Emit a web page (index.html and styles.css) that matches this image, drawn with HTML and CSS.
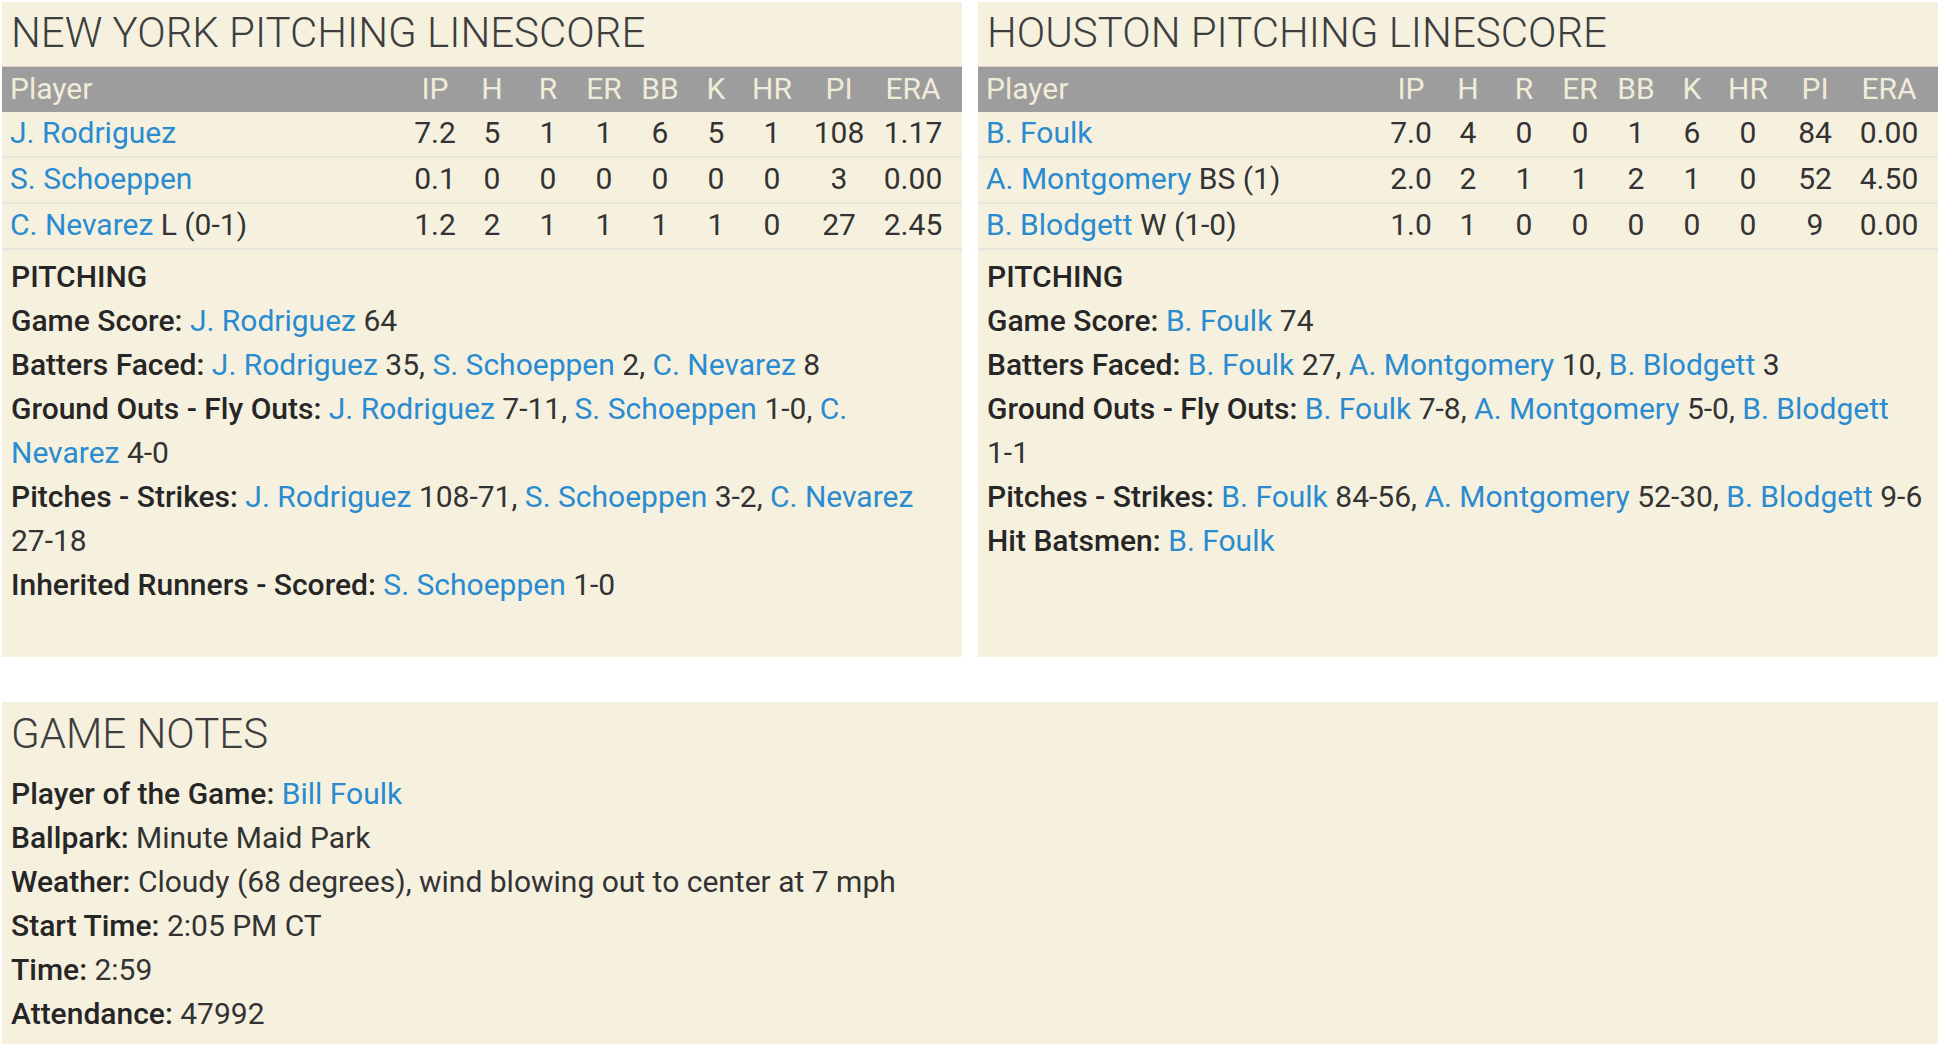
FILE: index.html
```html
<!DOCTYPE html>
<html lang="en">
<head>
<meta charset="utf-8">
<title>Pitching Linescore</title>
<link rel="stylesheet" href="styles.css">
</head>
<body>
<div class="top">
  <section class="panel">
    <h2 class="title">NEW YORK PITCHING LINESCORE</h2>
    <table class="lines">
      <colgroup><col><col class="c-ip"><col class="c-s"><col class="c-s"><col class="c-s"><col class="c-s"><col class="c-s"><col class="c-s"><col class="c-pi"><col class="c-era"></colgroup>
      <thead><tr><th class="name">Player</th><th>IP</th><th>H</th><th>R</th><th>ER</th><th>BB</th><th>K</th><th>HR</th><th>PI</th><th class="era">ERA</th></tr></thead>
      <tbody>
        <tr><td class="name"><a href="#">J. Rodriguez</a></td><td>7.2</td><td>5</td><td>1</td><td>1</td><td>6</td><td>5</td><td>1</td><td>108</td><td class="era">1.17</td></tr>
        <tr><td class="name"><a href="#">S. Schoeppen</a></td><td>0.1</td><td>0</td><td>0</td><td>0</td><td>0</td><td>0</td><td>0</td><td>3</td><td class="era">0.00</td></tr>
        <tr><td class="name"><a href="#">C. Nevarez</a> L (0-1)</td><td>1.2</td><td>2</td><td>1</td><td>1</td><td>1</td><td>1</td><td>0</td><td>27</td><td class="era">2.45</td></tr>
      </tbody>
    </table>
    <div class="notes">
      <p><b>PITCHING</b></p>
      <p><b>Game Score:</b> <a href="#">J. Rodriguez</a> 64</p>
      <p><b>Batters Faced:</b> <a href="#">J. Rodriguez</a> 35, <a href="#">S. Schoeppen</a> 2, <a href="#">C. Nevarez</a> 8</p>
      <p><b>Ground Outs - Fly Outs:</b> <a href="#">J. Rodriguez</a> <span class="v">7-11,</span> <a href="#">S. Schoeppen</a> <span class="v">1-0,</span> <a href="#">C. Nevarez</a> <span class="v">4-0</span></p>
      <p><b>Pitches - Strikes:</b> <a href="#">J. Rodriguez</a> <span class="v">108-71,</span> <a href="#">S. Schoeppen</a> <span class="v">3-2,</span> <a href="#">C. Nevarez</a> <span class="v">27-18</span></p>
      <p><b>Inherited Runners - Scored:</b> <a href="#">S. Schoeppen</a> 1-0</p>
    </div>
  </section>
  <section class="panel">
    <h2 class="title">HOUSTON PITCHING LINESCORE</h2>
    <table class="lines">
      <colgroup><col><col class="c-ip"><col class="c-s"><col class="c-s"><col class="c-s"><col class="c-s"><col class="c-s"><col class="c-s"><col class="c-pi"><col class="c-era"></colgroup>
      <thead><tr><th class="name">Player</th><th>IP</th><th>H</th><th>R</th><th>ER</th><th>BB</th><th>K</th><th>HR</th><th>PI</th><th class="era">ERA</th></tr></thead>
      <tbody>
        <tr><td class="name"><a href="#">B. Foulk</a></td><td>7.0</td><td>4</td><td>0</td><td>0</td><td>1</td><td>6</td><td>0</td><td>84</td><td class="era">0.00</td></tr>
        <tr><td class="name"><a href="#">A. Montgomery</a> BS (1)</td><td>2.0</td><td>2</td><td>1</td><td>1</td><td>2</td><td>1</td><td>0</td><td>52</td><td class="era">4.50</td></tr>
        <tr><td class="name"><a href="#">B. Blodgett</a> W (1-0)</td><td>1.0</td><td>1</td><td>0</td><td>0</td><td>0</td><td>0</td><td>0</td><td>9</td><td class="era">0.00</td></tr>
      </tbody>
    </table>
    <div class="notes">
      <p><b>PITCHING</b></p>
      <p><b>Game Score:</b> <a href="#">B. Foulk</a> 74</p>
      <p><b>Batters Faced:</b> <a href="#">B. Foulk</a> 27, <a href="#">A. Montgomery</a> 10, <a href="#">B. Blodgett</a> 3</p>
      <p><b>Ground Outs - Fly Outs:</b> <a href="#">B. Foulk</a> <span class="v">7-8,</span> <a href="#">A. Montgomery</a> <span class="v">5-0,</span> <a href="#">B. Blodgett</a> <span class="v">1-1</span></p>
      <p><b>Pitches - Strikes:</b> <a href="#">B. Foulk</a> <span class="v">84-56,</span> <a href="#">A. Montgomery</a> <span class="v">52-30,</span> <a href="#">B. Blodgett</a> <span class="v">9-6</span></p>
      <p><b>Hit Batsmen:</b> <a href="#">B. Foulk</a></p>
    </div>
  </section>
</div>
<section class="panel game-notes">
  <h2 class="title">GAME NOTES</h2>
  <div class="notes">
    <p><b>Player of the Game:</b> <a href="#">Bill Foulk</a></p>
    <p><b>Ballpark:</b> Minute Maid Park</p>
    <p><b>Weather:</b> Cloudy (68 degrees), wind blowing out to center at 7 mph</p>
    <p><b>Start Time:</b> 2:05 PM CT</p>
    <p><b>Time:</b> 2:59</p>
    <p><b>Attendance:</b> 47992</p>
  </div>
</section>
</body>
</html>
```
FILE: styles.css
```css
html {
  overflow: hidden;
  background: #ffffff;
}

body {
  margin: 2px 0 0 2px;
  font-family: Roboto, "Liberation Sans", sans-serif;
  font-size: 30px;
  color: #333333;
}

a {
  color: #2a8bd0;
  text-decoration: none;
}

.top {
  display: flex;
  gap: 16px;
}

.panel {
  flex: 1 1 0;
  background: #f6f1df;
  padding-bottom: 50px;
}

.title {
  margin: 7px 0 9px;
  padding-left: 9px;
  font-size: 42px;
  font-weight: 300;
  line-height: 48px;
  color: #3e3e3e;
}

.lines {
  width: 100%;
  border-collapse: collapse;
  table-layout: fixed;
}

.c-ip { width: 58px; }
.c-s { width: 56px; }
.c-pi { width: 78px; }
.c-era { width: 84px; }

.lines th {
  background: #9d9d9d;
  color: #f1ecda;
  font-weight: 400;
  height: 43px;
  padding: 0 0 2px;
  text-align: center;
  border-top: 1px solid #d9d4c4;
}

.lines td {
  height: 41px;
  padding: 0 0 3px;
  text-align: center;
  border-bottom: 2px solid #e8e5dc;
  white-space: nowrap;
}

.lines .name {
  text-align: left;
  padding-left: 8px;
}

.lines .era {
  padding-right: 14px;
}

.notes {
  padding: 5px 6px 0 9px;
}

.notes p {
  margin: 0;
  line-height: 44px;
}

.notes b {
  font-weight: 500;
  color: #262626;
}

.notes .v {
  white-space: nowrap;
}

.game-notes {
  display: flow-root;
  margin-top: 45px;
  height: 342px;
  box-sizing: border-box;
  padding-bottom: 9px;
}

.game-notes .title {
  margin: 8px 0 14px;
}

.game-notes .notes {
  padding-top: 0;
}
```
